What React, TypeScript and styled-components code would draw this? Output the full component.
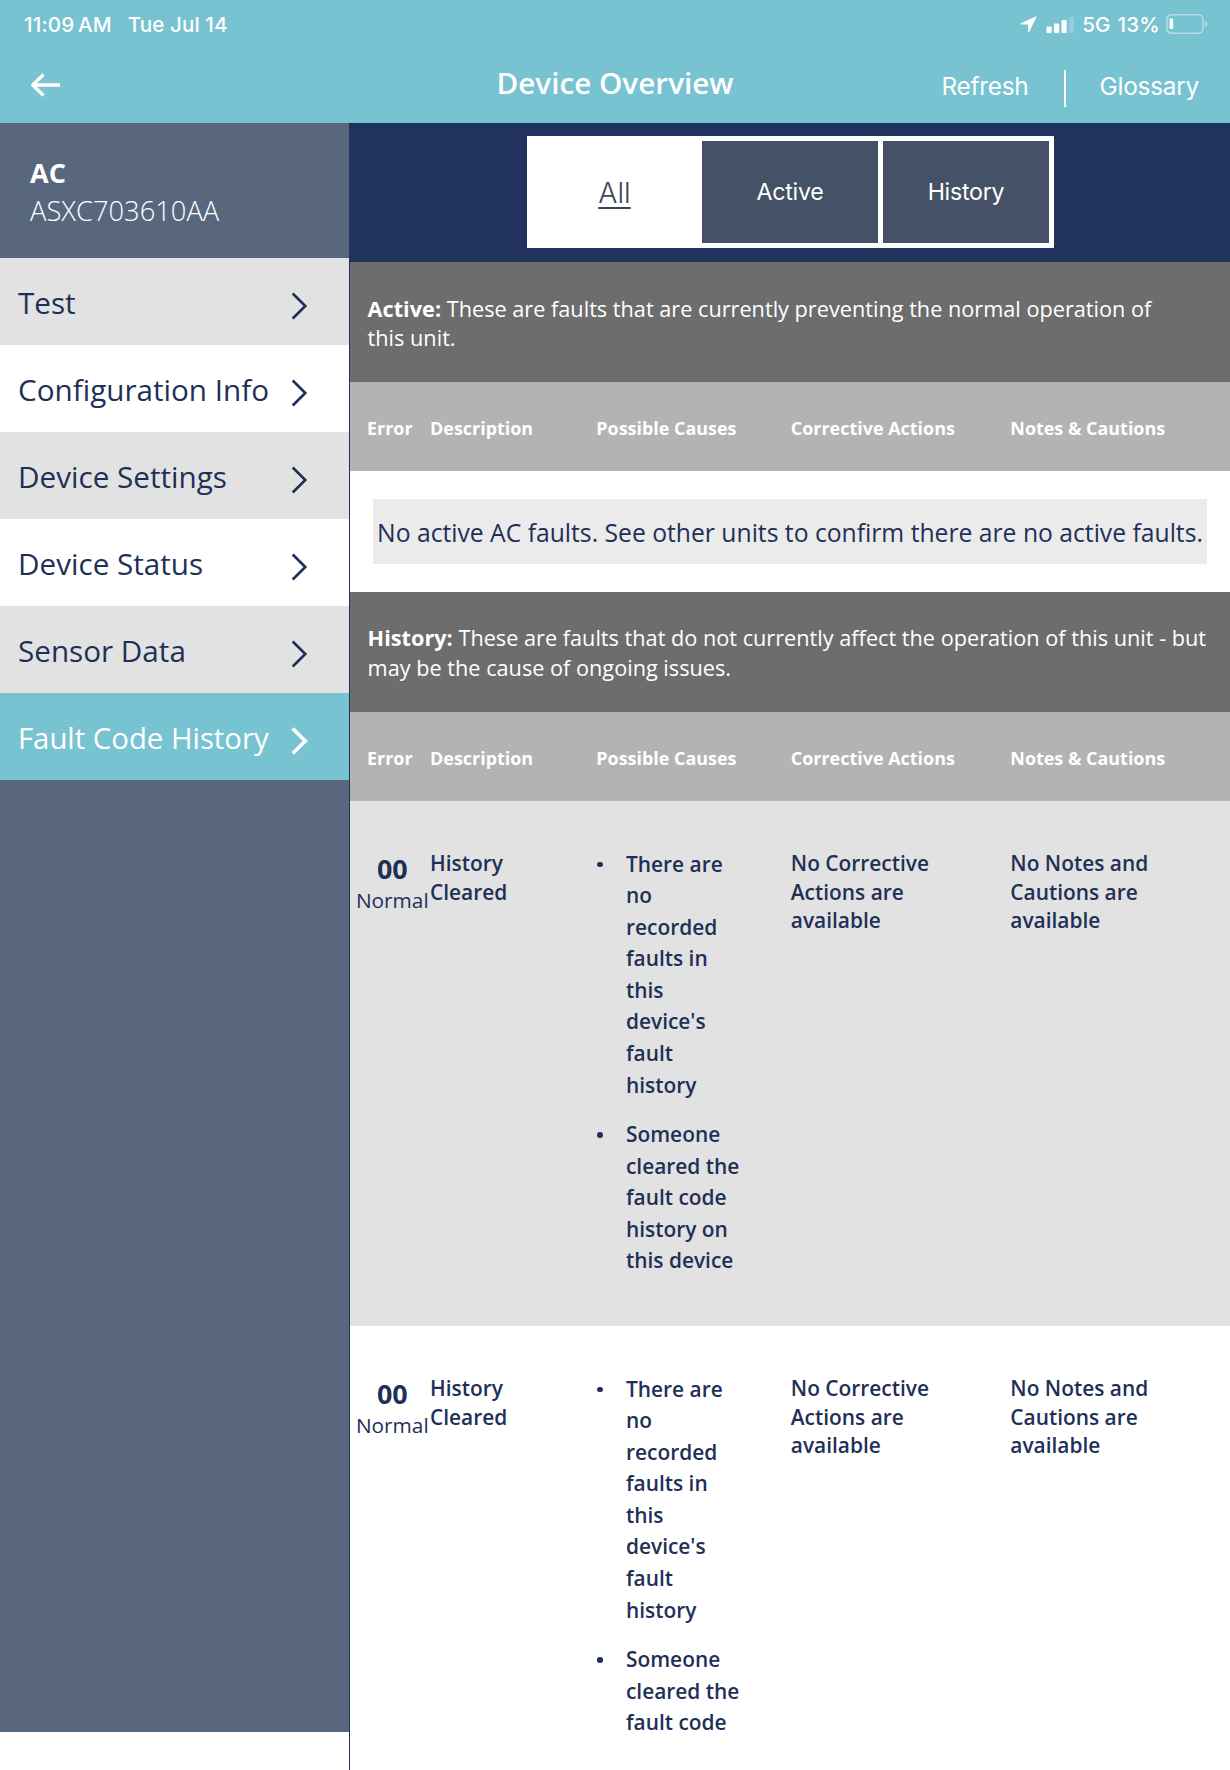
import React from 'react';
import styled, { createGlobalStyle } from 'styled-components';

const color = {
  teal: '#77c3d1',
  slate: '#58667e',
  navy: '#21335d',
  tab: '#455167',
  ink: '#1f3057',
  banner: '#6d6d6d',
  head: '#b3b3b3',
  stripe: '#e2e2e2',
};

const GlobalStyle = createGlobalStyle`
  *, *::before, *::after { box-sizing: border-box; }
  body {
    margin: 0;
    background: #fff;
    color: ${color.ink};
    font-family: 'Open Sans', 'Noto Sans', sans-serif;
  }
`;

const Screen = styled.div`
  display: flex;
  flex-direction: column;
  width: 1230px;
  height: 1770px;
  overflow: hidden;
`;

const TopArea = styled.header`
  flex: none;
  height: 123px;
  background: ${color.teal};
  color: #fff;
  font-family: Inter, 'Liberation Sans', sans-serif;
`;

const StatusBar = styled.div`
  display: flex;
  align-items: center;
  justify-content: space-between;
  height: 48px;
  padding: 0 22px 0 24px;
  font-size: 20.6px;
  font-weight: 500;
  line-height: 49px;
  white-space: nowrap;
`;

const Clock = styled.div`
  display: flex;
  gap: 16px;
`;

const Time = styled.span`
  letter-spacing: 0.15px;
  word-spacing: -2px;
`;

const DateText = styled.span`
  letter-spacing: 0.1px;
`;

const Indicators = styled.div`
  display: flex;
  align-items: center;
`;

const Network = styled.span`
  margin-left: 7px;
`;

const BatteryLevel = styled.span`
  margin: 0 6px 0 7px;
  letter-spacing: 0.2px;
`;

const NavBar = styled.div`
  display: grid;
  grid-template-columns: 1fr auto 1fr;
  align-items: center;
  height: 75px;
  padding: 0 30px;
`;

const BackButton = styled.button`
  display: flex;
  padding: 0;
  border: 0;
  background: none;
  color: inherit;
  margin-bottom: 2px;
`;

const Title = styled.h1`
  margin: 0 0 6px;
  font: 600 29.7px/40px 'Open Sans', 'Noto Sans', sans-serif;
`;

const NavActions = styled.div`
  display: flex;
  align-items: center;
  justify-content: flex-end;
  padding: 1px 1px 0 0;
  font-size: 24.4px;
  letter-spacing: -0.25px;
`;

const NavDivider = styled.span`
  width: 2px;
  height: 37px;
  margin: 5px 34px 0 35px;
  background: #fff;
`;

const Body = styled.div`
  display: flex;
  flex: 1;
  min-height: 0;
`;

const Sidebar = styled.aside`
  flex: none;
  width: 350px;
  border-right: 1px solid ${color.navy};
`;

const SidebarPanel = styled.div`
  height: 1609px;
  background: ${color.slate};
`;

const Unit = styled.div`
  height: 135px;
  padding: 31px 0 0 30px;
  color: #fff;
`;

const UnitName = styled.div`
  font-size: 27px;
  font-weight: 700;
  line-height: 37px;
`;

const UnitSerial = styled.div`
  font-size: 27.3px;
  font-weight: 300;
  line-height: 39px;
`;

const MenuItem = styled.a<{ $tone: 'grey' | 'white' | 'selected' }>`
  display: flex;
  align-items: center;
  justify-content: space-between;
  height: 87px;
  padding: 2px 41px 0 18px;
  background: ${(p) => ({ grey: color.stripe, white: '#fff', selected: color.teal })[p.$tone]};
  color: ${(p) => (p.$tone === 'selected' ? '#fff' : color.ink)};
  font-size: ${(p) => (p.$tone === 'selected' ? 29.3 : 29.65)}px;
  line-height: 40px;
  white-space: nowrap;

  svg { margin-top: 7px; }
`;

const Main = styled.main`
  flex: 1;
  min-width: 0;
`;

const FilterBar = styled.div`
  display: flex;
  justify-content: center;
  height: 139px;
  padding: 13px 0 0 1px;
  background: ${color.navy};
`;

const Filters = styled.div`
  display: grid;
  grid-template-columns: 170px 176px 166px;
  column-gap: 5px;
  width: 527px;
  height: 112px;
  padding: 5px 5px 5px 0;
  background: #fff;
  font-family: Inter, 'Liberation Sans', sans-serif;
`;

const Filter = styled.button<{ $on?: boolean }>`
  padding: ${(p) => (p.$on ? '0 0 0 5px' : '0')};
  border: 0;
  background: ${(p) => (p.$on ? '#fff' : color.tab)};
  color: ${(p) => (p.$on ? '#3c4358' : '#fff')};
  font-family: inherit;
  font-size: ${(p) => (p.$on ? '28.4px' : '23.2px')};
  font-weight: ${(p) => (p.$on ? 300 : 400)};
  letter-spacing: ${(p) => (p.$on ? '0' : '-0.25px')};
  text-decoration: ${(p) => (p.$on ? 'underline' : 'none')};
  text-decoration-thickness: 2px;
  text-underline-offset: 4px;
`;

const Banner = styled.p<{ $inset: number }>`
  height: 119.7px;
  margin: 0;
  padding: 31.5px ${(p) => p.$inset}px 0 17.6px;
  background: ${color.banner};
  color: #fff;
  font-size: 21.7px;
  line-height: 29.5px;
`;

const columns = '80px 166.3px 194.5px 219.5px 1fr';

const HeadRow = styled.div`
  display: grid;
  grid-template-columns: ${columns};
  align-items: center;
  height: 89.7px;
  padding-top: 2.4px;
  background: ${color.head};
  color: #fff;
  font-size: 17.96px;
  font-weight: 700;
  white-space: nowrap;

  span:first-child { padding-left: 17px; }
`;

const EmptyArea = styled.div`
  height: 120.6px;
  padding: 27.6px 23px 0;
`;

const EmptyMessage = styled.div`
  height: 65px;
  background: #ebebeb;
  font-size: 24.7px;
  line-height: 67px;
  text-align: center;
  white-space: nowrap;
`;

const FaultRow = styled.div<{ $striped?: boolean }>`
  display: grid;
  grid-template-columns: ${columns};
  align-items: start;
  height: 525px;
  padding-top: 48px;
  background: ${(p) => (p.$striped ? color.stripe : '#fff')};
  font-size: 20.88px;
  font-weight: 600;
  line-height: 28.4px;
`;

const ErrorCell = styled.div`
  display: flex;
  flex-direction: column;
  align-items: center;
  padding: 4px 0 0 4.6px;
  white-space: nowrap;
`;

const Code = styled.span`
  font-size: 26.9px;
  font-weight: 700;
  line-height: 32px;
`;

const Severity = styled.span`
  font-size: 20.8px;
  font-weight: 400;
  line-height: 31px;
`;

const TextCell = styled.div<{ $width: number }>`
  width: ${(p) => p.$width}px;
`;

const Causes = styled.ul`
  display: flex;
  flex-direction: column;
  gap: 17.9px;
  margin: -0.6px 0 0;
  padding: 0;
  list-style: none;
  line-height: 31.55px;
`;

const Cause = styled.li`
  display: flex;
  align-items: flex-start;
  gap: 23.2px;
  width: 149px;

  &::before {
    content: '';
    flex: none;
    width: 5.5px;
    height: 5.5px;
    margin: 13px 0 0 1px;
    border-radius: 50%;
    background: ${color.ink};
  }
`;

const menu = ['Test', 'Configuration Info', 'Device Settings', 'Device Status', 'Sensor Data', 'Fault Code History'];
const headings = ['Error', 'Description', 'Possible Causes', 'Corrective Actions', 'Notes & Cautions'];
const noHistory = "There are no recorded faults in this device's fault history";

function LocationIcon() {
  return (
    <svg width="17" height="17" viewBox="0 0 17 17" fill="#fff">
      <path d="M15.600.500 1 7.200c-.7.400-.6 1.200.2 1.200l6.900.100.100 6.900c0 .8.900 1 1.200.200L16.400 1.300c.2-.6-.2-1.100-.8-.8Z" />
    </svg>
  );
}

const Signal = styled.svg`
  margin-left: 9px;
`;

function SignalIcon() {
  return (
    <Signal width="29" height="17" viewBox="0 0 29 17" fill="#fff">
      <rect x="0.5" y="10.5" width="5.2" height="6.5" rx="1" />
      <rect x="8" y="7.5" width="5.2" height="9.5" rx="1" />
      <rect x="15.5" y="4" width="5.2" height="13" rx="1" />
      <rect x="23" y="1" width="5" height="16" rx="1" opacity="0.2" />
    </Signal>
  );
}

function BatteryIcon() {
  return (
    <svg width="42" height="20" viewBox="0 0 42 20" fill="none">
      <rect x="1" y="0.8" width="36" height="18.4" rx="4.5" stroke="#fff" strokeOpacity="0.45" strokeWidth="1.5" />
      <rect x="3.5" y="4.5" width="3.6" height="10.5" rx="1" fill="#fff" />
      <path d="M39.2 7v6c1.300-.5 2-1.700 2-3s-.7-2.500-2-3Z" fill="#fff" fillOpacity="0.5" />
    </svg>
  );
}

function BackIcon() {
  return (
    <svg width="31" height="24" viewBox="0 0 31 24" fill="none" stroke="#fff" strokeWidth="3.3">
      <path d="M13.500 1.500 2.700 12l10.800 10.500M2.700 12H30" strokeLinejoin="round" />
    </svg>
  );
}

function Chevron({ bold }: { bold?: boolean }) {
  return (
    <svg width="17" height="28" viewBox="0 0 17 28" fill="none" stroke="currentColor" strokeWidth={bold ? 3.7 : 2.6}>
      <path d="M1.700 1.500 14.300 14 1.700 26.500" />
    </svg>
  );
}

function TableHead() {
  return (
    <HeadRow>
      {headings.map((h) => (
        <span key={h}>{h}</span>
      ))}
    </HeadRow>
  );
}

function Fault({ striped, causes }: { striped?: boolean; causes: string[] }) {
  return (
    <FaultRow $striped={striped}>
      <ErrorCell>
        <Code>00</Code>
        <Severity>Normal</Severity>
      </ErrorCell>
      <TextCell $width={100}>History Cleared</TextCell>
      <Causes>
        {causes.map((c) => (
          <Cause key={c}>
            <span>{c}</span>
          </Cause>
        ))}
      </Causes>
      <TextCell $width={150}>No Corrective Actions are available</TextCell>
      <TextCell $width={150}>No Notes and Cautions are available</TextCell>
    </FaultRow>
  );
}

export default function App() {
  return (
    <Screen>
      <GlobalStyle />
      <TopArea>
        <StatusBar>
          <Clock>
            <Time>11:09 AM</Time>
            <DateText>Tue Jul 14</DateText>
          </Clock>
          <Indicators>
            <LocationIcon />
            <SignalIcon />
            <Network>5G</Network>
            <BatteryLevel>13%</BatteryLevel>
            <BatteryIcon />
          </Indicators>
        </StatusBar>
        <NavBar>
          <BackButton aria-label="Back">
            <BackIcon />
          </BackButton>
          <Title>Device Overview</Title>
          <NavActions>
            <span>Refresh</span>
            <NavDivider />
            <span>Glossary</span>
          </NavActions>
        </NavBar>
      </TopArea>
      <Body>
        <Sidebar>
          <SidebarPanel>
            <Unit>
              <UnitName>AC</UnitName>
              <UnitSerial>ASXC703610AA</UnitSerial>
            </Unit>
            {menu.map((label, i) => {
              const selected = i === menu.length - 1;
              return (
                <MenuItem key={label} $tone={selected ? 'selected' : i % 2 ? 'white' : 'grey'}>
                  {label}
                  <Chevron bold={selected} />
                </MenuItem>
              );
            })}
          </SidebarPanel>
        </Sidebar>
        <Main>
          <FilterBar>
            <Filters>
              <Filter $on>All</Filter>
              <Filter>Active</Filter>
              <Filter>History</Filter>
            </Filters>
          </FilterBar>
          <Banner $inset={60}>
            <strong>Active:</strong> These are faults that are currently preventing the normal operation of this unit.
          </Banner>
          <TableHead />
          <EmptyArea>
            <EmptyMessage>No active AC faults. See other units to confirm there are no active faults.</EmptyMessage>
          </EmptyArea>
          <Banner $inset={14}>
            <strong>History:</strong> These are faults that do not currently affect the operation of this unit - but may
            be the cause of ongoing issues.
          </Banner>
          <TableHead />
          <Fault striped causes={[noHistory, 'Someone cleared the fault code history on this device']} />
          <Fault causes={[noHistory, 'Someone cleared the fault code']} />
        </Main>
      </Body>
    </Screen>
  );
}
